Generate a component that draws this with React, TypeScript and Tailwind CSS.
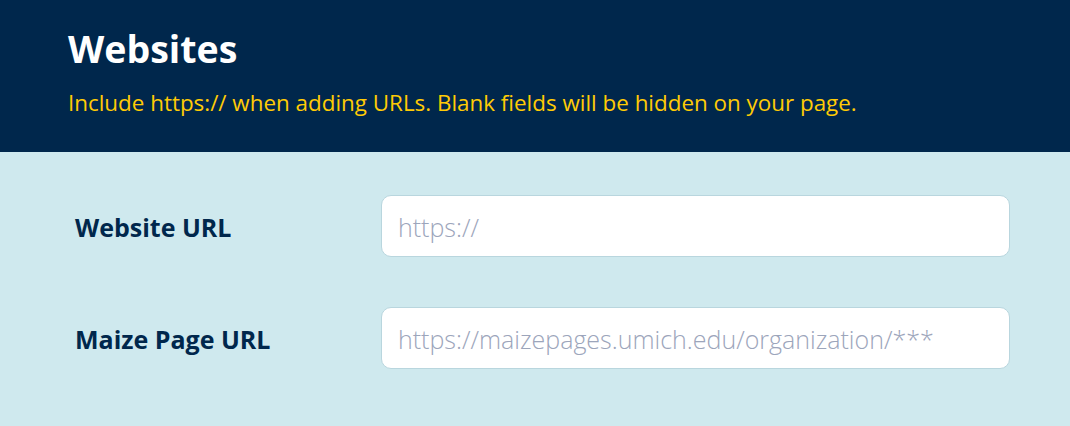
import React from 'react';

const fields = [
  { label: 'Website URL', placeholder: 'https://' },
  { label: 'Maize Page URL', placeholder: 'https://maizepages.umich.edu/organization/***' },
];

export default function App() {
  return (
    <div className="min-h-[426px] w-full bg-[#cfe9ee] font-['Open_Sans',sans-serif]">
      <div className="h-[152px] bg-[#00274c] pl-[68px] pt-[24px]">
        <h1 className="text-[37.5px] font-bold leading-[50px] text-white">Websites</h1>
        <p className="mt-[14px] text-[22.4px] leading-[30px] text-[#ffcb05]">
          Include https:// when adding URLs. Blank fields will be hidden on your page.
        </p>
      </div>
      <div className="flex flex-col gap-[50px] pl-[75px] pr-[60px] pt-[43px]">
        {fields.map((f) => (
          <div key={f.label} className="flex items-center">
            <label className="w-[306px] shrink-0 pt-[3px] text-[25px] font-bold text-[#00274c]">{f.label}</label>
            <input
              type="text"
              placeholder={f.placeholder}
              className="h-[62px] flex-1 rounded-[10px] border border-[#b9d6de] bg-white px-[16px] pt-[2px] text-[25px] font-light text-[#00274c] outline-none placeholder:text-[#9ca5bb]"
            />
          </div>
        ))}
      </div>
    </div>
  );
}
